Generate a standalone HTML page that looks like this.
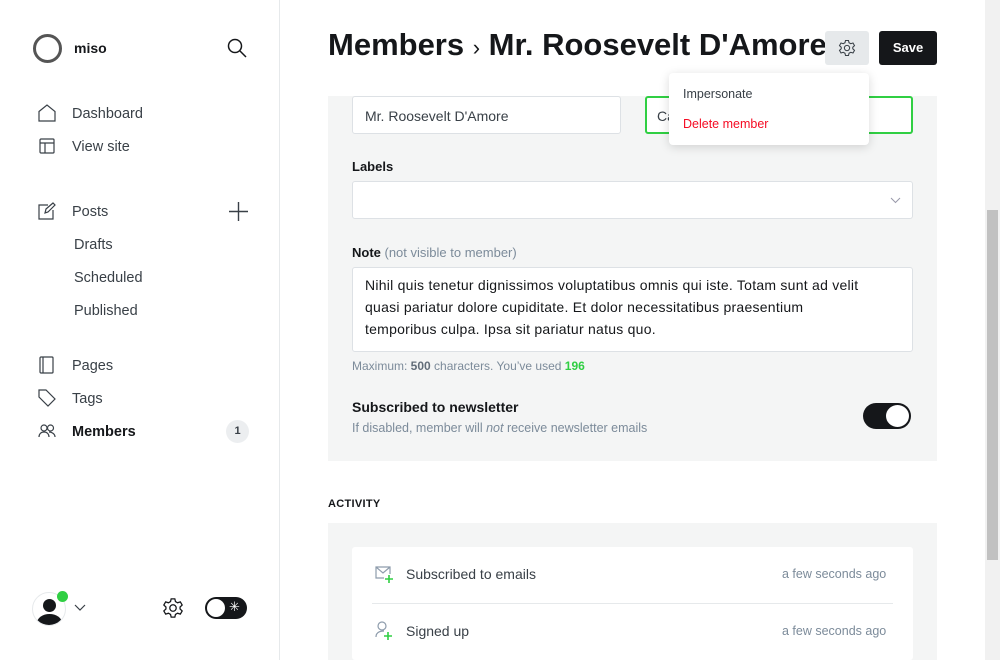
<!DOCTYPE html>
<html><head><style>
*{box-sizing:border-box;margin:0;padding:0}
body{width:1000px;height:660px;overflow:hidden;font-family:"Liberation Sans",sans-serif;background:#fff;position:relative;color:#15171a}
.abs{position:absolute}
.nav{position:absolute;left:72px;font-size:14.5px;color:#394047;transform:translateY(-50%);margin-top:1px}
.ic{position:absolute;transform:translateY(-50%)}
.card{position:absolute;background:#fff;border:1px solid #dde1e5;border-radius:3px}
.lbl{position:absolute;font-size:13px;font-weight:bold;color:#15171a}
</style></head><body>
<!-- sidebar -->
<div class="abs" style="left:279px;top:0;width:1px;height:660px;background:#e6e9eb"></div>
<div class="abs" style="left:33px;top:34px;width:29px;height:29px;border-radius:50%;border:3px solid #555;"></div>
<div class="abs" style="left:74px;top:40px;font-size:14px;font-weight:bold">miso</div>
<svg class="abs" style="left:227px;top:38px" width="20" height="20" viewBox="0 0 20 20" fill="none" stroke="#15171a" stroke-width="1.5"><circle cx="8" cy="8" r="6.5"/><path d="M13 13l6 6"/></svg>

<svg class="ic" style="left:38px;top:113px" width="18" height="18" viewBox="0 0 18 18" fill="none" stroke="#394047" stroke-width="1.2"><path d="M1 7.5L9 1l8 6.5V17H1z"/></svg>
<div class="nav" style="top:113px">Dashboard</div>
<svg class="ic" style="left:39px;top:146px" width="16" height="16" viewBox="0 0 16 16" fill="none" stroke="#394047" stroke-width="1.2"><rect x="1" y="1" width="14" height="14" rx="1"/><path d="M1 5h14M6 5v10"/></svg>
<div class="nav" style="top:146px">View site</div>
<svg class="ic" style="left:38px;top:211px" width="18" height="18" viewBox="0 0 18 18" fill="none" stroke="#394047" stroke-width="1.2"><path d="M10 3H1v14h14V8M7 11l1-4 7-6 2 2-7 7z"/></svg>
<div class="nav" style="top:211px">Posts</div>
<svg class="abs" style="left:229px;top:202px" width="19" height="19" viewBox="0 0 19 19" stroke="#394047" stroke-width="1.4"><path d="M9.5 0v19M0 9.5h19"/></svg>
<div class="nav" style="top:244px;left:74px">Drafts</div>
<div class="nav" style="top:277px;left:74px">Scheduled</div>
<div class="nav" style="top:310px;left:74px">Published</div>
<svg class="ic" style="left:39px;top:365px" width="16" height="18" viewBox="0 0 16 18" fill="none" stroke="#394047" stroke-width="1.2"><rect x="1" y="1" width="13" height="16" rx="1"/><path d="M4 1v16"/></svg>
<div class="nav" style="top:365px">Pages</div>
<svg class="ic" style="left:38px;top:398px" width="18" height="18" viewBox="0 0 18 18" fill="none" stroke="#394047" stroke-width="1.2"><path d="M1 1h7l9 9-7 7-9-9z"/></svg>
<div class="nav" style="top:398px">Tags</div>
<svg class="ic" style="left:38px;top:431px" width="18" height="14" viewBox="0 0 18 14" fill="none" stroke="#394047" stroke-width="1.2"><circle cx="6" cy="4" r="3"/><circle cx="12.5" cy="4" r="3"/><path d="M1 13c0-3 2-5 5-5s5 2 5 5M11 8c3 0 6 2 6 5"/></svg>
<div class="nav" style="top:431px;font-weight:bold;color:#15171a">Members</div>
<div class="abs" style="left:226px;top:420px;width:23px;height:23px;border-radius:50%;background:#eceef0;font-size:11px;font-weight:bold;color:#394047;text-align:center;line-height:23px">1</div>

<div class="abs" style="left:32px;top:592px;width:34px;height:34px;border-radius:50%;background:#fff;border:1px solid #e6e9eb;overflow:hidden">
<div class="abs" style="left:10px;top:6px;width:13px;height:13px;border-radius:50%;background:#15171a"></div>
<div class="abs" style="left:4px;top:21px;width:25px;height:18px;border-radius:50% 50% 0 0;background:#15171a"></div></div>
<div class="abs" style="left:57px;top:591px;width:11px;height:11px;border-radius:50%;background:#30cf43"></div>
<svg class="abs" style="left:74px;top:604px" width="12" height="8" viewBox="0 0 12 8" fill="none" stroke="#394047" stroke-width="1.2"><path d="M1 1l5 5 5-5"/></svg>
<svg class="abs" style="left:162px;top:597px" width="22" height="22" viewBox="0 0 24 24" fill="none" stroke="#15171a" stroke-width="1.4"><circle cx="12" cy="12" r="3.5"/><path d="M10 2h4l.7 3 2.3 1.3 3-1 2 3.5-2.3 2.2v2l2.3 2.2-2 3.5-3-1L14.7 19 14 22h-4l-.7-3L7 17.7l-3 1-2-3.5L4.3 13v-2L2 8.8l2-3.5 3 1L9.3 5z"/></svg>
<div class="abs" style="left:205px;top:597px;width:42px;height:22px;border-radius:11px;background:#15171a"></div>
<div class="abs" style="left:207px;top:599px;width:18px;height:18px;border-radius:50%;background:#fff"></div>
<div class="abs" style="left:229px;top:599px;font-size:13px;color:#fff">✳</div>

<!-- scrollbar -->
<div class="abs" style="left:985px;top:0;width:15px;height:660px;background:#f1f1f1"></div>
<div class="abs" style="left:987px;top:210px;width:11px;height:350px;background:#c1c1c1"></div>

<!-- header -->
<div class="abs" style="left:328px;top:27px;font-size:31px;font-weight:bold;letter-spacing:0px;white-space:nowrap">Members <span style="font-size:22px;font-weight:normal">›</span> Mr. Roosevelt D'Amore</div>
<div class="abs" style="left:825px;top:31px;width:44px;height:34px;background:#e6e9eb;border-radius:3px"></div>
<svg class="abs" style="left:838px;top:39px" width="18" height="18" viewBox="0 0 24 24" fill="none" stroke="#394047" stroke-width="1.4"><circle cx="12" cy="12" r="3.5"/><path d="M10 2h4l.7 3 2.3 1.3 3-1 2 3.5-2.3 2.2v2l2.3 2.2-2 3.5-3-1L14.7 19 14 22h-4l-.7-3L7 17.7l-3 1-2-3.5L4.3 13v-2L2 8.8l2-3.5 3 1L9.3 5z"/></svg>
<div class="abs" style="left:879px;top:31px;width:58px;height:34px;background:#15171a;border-radius:3px;color:#fff;font-size:13px;font-weight:bold;text-align:center;line-height:34px">Save</div>

<!-- form panel -->
<div class="abs" style="left:328px;top:96px;width:609px;height:365px;background:#f4f5f5"></div>
<div class="card" style="left:352px;top:96px;width:269px;height:38px;font-size:14px;color:#394047;padding:11px 12px">Mr. Roosevelt D'Amore</div>
<div class="abs" style="left:645px;top:96px;width:268px;height:38px;border:2px solid #30cf43;border-radius:3px;background:#fff;font-size:14px;padding:10px 10px;color:#394047">Ca</div>
<div class="lbl" style="left:352px;top:159px">Labels</div>
<div class="card" style="left:352px;top:181px;width:561px;height:38px"></div>
<svg class="abs" style="left:890px;top:197px" width="11" height="7" viewBox="0 0 11 7" fill="none" stroke="#99a" stroke-width="1"><path d="M1 1l4.5 4.5L10 1"/></svg>
<div class="lbl" style="left:352px;top:245px">Note <span style="font-weight:normal;color:#7c8b9a">(not visible to member)</span></div>
<div class="card" style="left:352px;top:267px;width:561px;height:85px;font-size:14px;line-height:22px;color:#15171a;padding:6px 12px;letter-spacing:0.25px;white-space:nowrap">Nihil quis tenetur dignissimos voluptatibus omnis qui iste. Totam sunt ad velit<br>quasi pariatur dolore cupiditate. Et dolor necessitatibus praesentium<br>temporibus culpa. Ipsa sit pariatur natus quo.</div>
<div class="abs" style="left:352px;top:359px;font-size:12px;color:#7c8b9a">Maximum: <b style="color:#626d79">500</b> characters. You’ve used <b style="color:#30cf43">196</b></div>
<div class="abs" style="left:352px;top:399px;font-size:14px;font-weight:bold">Subscribed to newsletter</div>
<div class="abs" style="left:352px;top:421px;font-size:12.5px;color:#7c8b9a">If disabled, member will <i>not</i> receive newsletter emails</div>
<div class="abs" style="left:863px;top:403px;width:48px;height:26px;border-radius:13px;background:#15171a"></div>
<div class="abs" style="left:886px;top:405px;width:23px;height:22px;border-radius:50%;background:#fff"></div>

<!-- activity -->
<div class="abs" style="left:328px;top:498px;font-size:11px;font-weight:bold;letter-spacing:0.3px">ACTIVITY</div>
<div class="abs" style="left:328px;top:523px;width:609px;height:137px;background:#f4f5f5"></div>
<div class="abs" style="left:352px;top:547px;width:561px;height:113px;background:#fff;border-radius:3px"></div>
<svg class="abs" style="left:375px;top:566px" width="19" height="18" viewBox="0 0 19 18" fill="none" stroke-width="1.2"><path stroke="#8e9cac" d="M9 12H1V1h14v7M1 1l7 6 7-6"/><path stroke="#30cf43" stroke-width="1.6" d="M14 9v8M10 13h8"/></svg>
<div class="abs" style="left:406px;top:566px;font-size:14px;color:#394047">Subscribed to emails</div>
<div class="abs" style="left:782px;top:567px;font-size:12.5px;color:#7c8b9a">a few seconds ago</div>
<div class="abs" style="left:372px;top:603px;width:521px;height:1px;background:#e6e9eb"></div>
<svg class="abs" style="left:375px;top:621px" width="19" height="20" viewBox="0 0 19 20" fill="none" stroke-width="1.2"><circle stroke="#8e9cac" cx="7" cy="5" r="4"/><path stroke="#8e9cac" d="M1 16c0-4 3-6 8-6"/><path stroke="#30cf43" stroke-width="1.6" d="M13 11v8M9 15h8"/></svg>
<div class="abs" style="left:406px;top:623px;font-size:14px;color:#394047">Signed up</div>
<div class="abs" style="left:782px;top:624px;font-size:12.5px;color:#7c8b9a">a few seconds ago</div>

<!-- dropdown -->
<div class="abs" style="left:669px;top:73px;width:200px;height:72px;background:#fff;border-radius:4px;box-shadow:0 2px 10px rgba(0,0,0,.15)"></div>
<div class="abs" style="left:683px;top:87px;font-size:12.5px;color:#394047">Impersonate</div>
<div class="abs" style="left:683px;top:117px;font-size:12.5px;color:#f50b23">Delete member</div>
</body></html>
